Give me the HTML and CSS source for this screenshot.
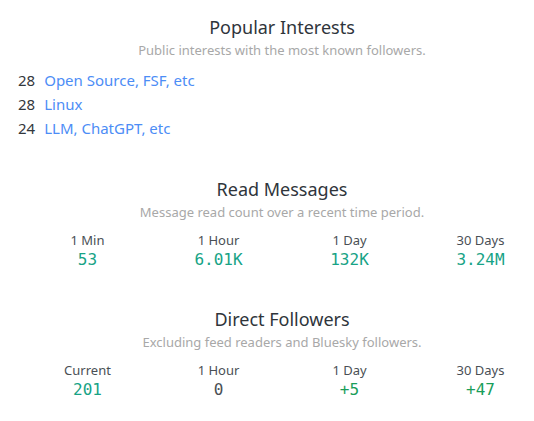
FILE: index.html
```html
<!DOCTYPE html>
<html>
<head>
<meta charset="utf-8">
<link rel="stylesheet" href="styles.css">
</head>
<body>
<div class="page">
  <section class="section">
    <h2 class="title">Popular Interests</h2>
    <p class="subtitle">Public interests with the most known followers.</p>
    <ul class="interests">
      <li class="interest"><span class="count">28</span><a class="link" href="#">Open Source, FSF, etc</a></li>
      <li class="interest"><span class="count">28</span><a class="link" href="#">Linux</a></li>
      <li class="interest"><span class="count">24</span><a class="link" href="#">LLM, ChatGPT, etc</a></li>
    </ul>
  </section>
  <section class="section">
    <h2 class="title">Read Messages</h2>
    <p class="subtitle">Message read count over a recent time period.</p>
    <div class="stats">
      <div class="stat"><div class="label">1 Min</div><div class="value">53</div></div>
      <div class="stat"><div class="label">1 Hour</div><div class="value">6.01K</div></div>
      <div class="stat"><div class="label">1 Day</div><div class="value">132K</div></div>
      <div class="stat"><div class="label">30 Days</div><div class="value">3.24M</div></div>
    </div>
  </section>
  <section class="section">
    <h2 class="title">Direct Followers</h2>
    <p class="subtitle">Excluding feed readers and Bluesky followers.</p>
    <div class="stats">
      <div class="stat"><div class="label">Current</div><div class="value">201</div></div>
      <div class="stat"><div class="label">1 Hour</div><div class="value zero">0</div></div>
      <div class="stat"><div class="label">1 Day</div><div class="value plus">+5</div></div>
      <div class="stat"><div class="label">30 Days</div><div class="value plus">+47</div></div>
    </div>
  </section>
</div>
</body>
</html>
```
FILE: styles.css
```css
html, body {
  margin: 0;
  padding: 0;
  overflow: hidden;
  background: #ffffff;
}
body {
  font-family: "Noto Sans", "DejaVu Sans", sans-serif;
  color: #333a40;
}
.page {
  width: 528px;
  padding-left: 18px;
  padding-top: 14px;
}
.section {
  margin-bottom: 36px;
}
.title {
  margin: 0;
  text-align: center;
  font-size: 18px;
  font-weight: 400;
  line-height: 26px;
  color: #2f353b;
}
.subtitle {
  margin: 0;
  text-align: center;
  font-size: 13px;
  line-height: 20px;
  color: #a8a8a8;
}
.interests {
  list-style: none;
  margin: 8px 0 0;
  padding: 0;
}
.interest {
  display: flex;
  gap: 9px;
  font-size: 15px;
  line-height: 24px;
}
.count {
  color: #33373c;
}
.link {
  color: #4c8df6;
  text-decoration: none;
}
.stats {
  display: grid;
  grid-template-columns: repeat(4, 1fr);
  margin-top: 8px;
  margin-left: 4px;
}
.stat {
  text-align: center;
}
.label {
  font-size: 13px;
  line-height: 20px;
  color: #4a4f55;
}
.value {
  font-family: "DejaVu Sans Mono", monospace;
  font-size: 16px;
  line-height: 20px;
  color: #17a386;
}
.value.zero {
  color: #4a4f55;
}
.value.plus {
  color: #1a9e5a;
}
```
